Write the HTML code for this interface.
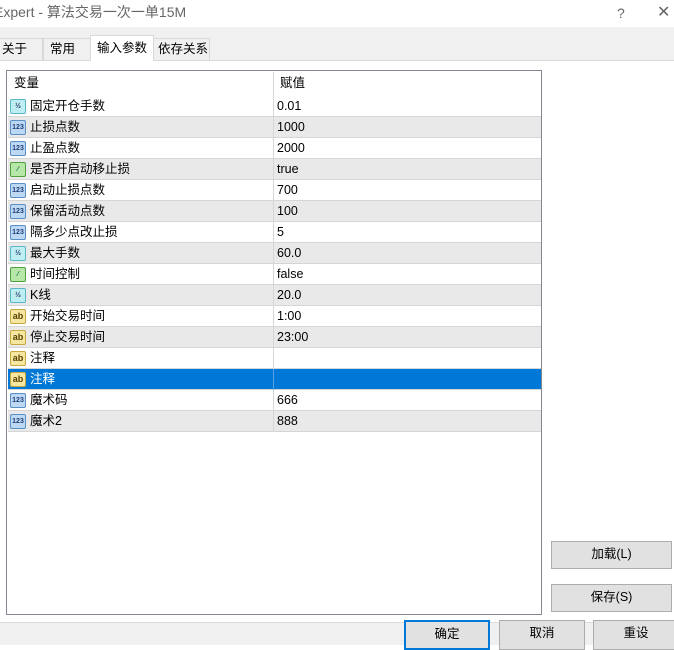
<!DOCTYPE html>
<html><head><meta charset="utf-8"><style>
*{margin:0;padding:0;box-sizing:border-box}
body{width:674px;height:645px;overflow:hidden;background:#fff;font-family:"Liberation Sans","Noto Sans CJK SC",sans-serif;font-size:12.5px;color:#000;position:relative}
.abs{position:absolute}
.title{left:-6px;top:0;width:680px;height:27px;background:#fff;color:#666;font-size:14px;line-height:25px}
.tabbar{left:0;top:27px;width:674px;height:34px;background:#f0f0f0;border-bottom:1px solid #d9d9d9}
.tab{top:11px;height:22px;border:1px solid #d9d9d9;border-bottom:none;background:#f0f0f0;line-height:21px;padding-left:6px;white-space:nowrap;overflow:hidden}
.list{left:6px;top:70px;width:536px;height:545px;border:1px solid #828790;background:#fff}
.row{position:absolute;left:1px;width:533px;height:21px;border-bottom:1px solid #d6d6d6;line-height:20px}
.row.g{background:#e9e9e9}
.row.sel{background:#0078d7;color:#fff}
.row .n{position:absolute;left:22px}
.row .v{position:absolute;left:269px}
.row .d{position:absolute;left:265px;top:0;width:1px;height:21px;background:#d6d6d6}
.ic{position:absolute;left:2px;top:3px;width:16px;height:15px;border-radius:2px;font-size:7px;line-height:13px;text-align:center;font-weight:bold}
.i123{background:#bcd8f2;border:1px solid #5a8fc8;color:#1e3f7a}
.ihalf{background:#bfeef2;border:1px solid #58b8c8;color:#236}
.iab{background:#f6e7a0;border:1px solid #c8a840;color:#5a4000;font-size:9px}
.ibool{background:#b6e6a8;border:1px solid #50a040;color:#164}
.btn{background:#e1e1e1;border:1px solid #adadad;text-align:center;line-height:25px}
.bottom{left:0;top:622px;width:674px;height:23px;background:#f0f0f0;border-top:1px solid #dcdcdc}
</style></head><body>
<div class="abs title">Expert - 算法交易一次一单15M<span style="position:absolute;left:623px;top:1px">?</span><span style="position:absolute;left:663px;top:0;font-size:16px">✕</span></div>
<div class="abs tabbar"></div>
<div class="abs tab" style="left:-5px;width:48px;top:38px;padding-left:6px">关于</div>
<div class="abs tab" style="left:43px;width:48px;top:38px">常用</div>
<div class="abs tab" style="left:90px;width:64px;top:35px;height:26px;background:#fff;line-height:24px;padding-left:6px">输入参数</div>
<div class="abs tab" style="left:153px;width:57px;top:38px;padding-left:4px">依存关系</div>
<div class="abs list">
 <div class="row" style="top:1px;height:24px;line-height:23px;border-bottom:none"><span class="n" style="left:6px">变量</span><span class="d" style="height:24px"></span><span class="v" style="left:272px">赋值</span></div>
</div>
<div class="abs" id="rows" style="left:7px;top:96px">
<div class="row"><span class="ic ihalf">½</span><span class="n">固定开仓手数</span><span class="d"></span><span class="v">0.01</span></div>
<div class="row g" style="top:21px"><span class="ic i123">123</span><span class="n">止损点数</span><span class="d"></span><span class="v">1000</span></div>
<div class="row" style="top:42px"><span class="ic i123">123</span><span class="n">止盈点数</span><span class="d"></span><span class="v">2000</span></div>
<div class="row g" style="top:63px"><span class="ic ibool">⁄</span><span class="n">是否开启动移止损</span><span class="d"></span><span class="v">true</span></div>
<div class="row" style="top:84px"><span class="ic i123">123</span><span class="n">启动止损点数</span><span class="d"></span><span class="v">700</span></div>
<div class="row g" style="top:105px"><span class="ic i123">123</span><span class="n">保留活动点数</span><span class="d"></span><span class="v">100</span></div>
<div class="row" style="top:126px"><span class="ic i123">123</span><span class="n">隔多少点改止损</span><span class="d"></span><span class="v">5</span></div>
<div class="row g" style="top:147px"><span class="ic ihalf">½</span><span class="n">最大手数</span><span class="d"></span><span class="v">60.0</span></div>
<div class="row" style="top:168px"><span class="ic ibool">⁄</span><span class="n">时间控制</span><span class="d"></span><span class="v">false</span></div>
<div class="row g" style="top:189px"><span class="ic ihalf">½</span><span class="n">K线</span><span class="d"></span><span class="v">20.0</span></div>
<div class="row" style="top:210px"><span class="ic iab">ab</span><span class="n">开始交易时间</span><span class="d"></span><span class="v">1:00</span></div>
<div class="row g" style="top:231px"><span class="ic iab">ab</span><span class="n">停止交易时间</span><span class="d"></span><span class="v">23:00</span></div>
<div class="row" style="top:252px"><span class="ic iab">ab</span><span class="n">注释</span><span class="d"></span><span class="v"></span></div>
<div class="row sel" style="top:273px"><span class="ic iab">ab</span><span class="n">注释</span><span class="d" style="background:#5aa0e0"></span><span class="v"></span></div>
<div class="row" style="top:294px"><span class="ic i123">123</span><span class="n">魔术码</span><span class="d"></span><span class="v">666</span></div>
<div class="row g" style="top:315px"><span class="ic i123">123</span><span class="n">魔术2</span><span class="d"></span><span class="v">888</span></div>
</div>
<div class="abs btn" style="left:551px;top:541px;width:121px;height:28px">加载(L)</div>
<div class="abs btn" style="left:551px;top:584px;width:121px;height:28px">保存(S)</div>
<div class="abs bottom"></div>
<div class="abs btn" style="left:404px;top:620px;width:86px;height:30px;border:2px solid #0078d7">确定</div>
<div class="abs btn" style="left:499px;top:620px;width:86px;height:30px">取消</div>
<div class="abs btn" style="left:593px;top:620px;width:86px;height:30px">重设</div>
</body></html>
